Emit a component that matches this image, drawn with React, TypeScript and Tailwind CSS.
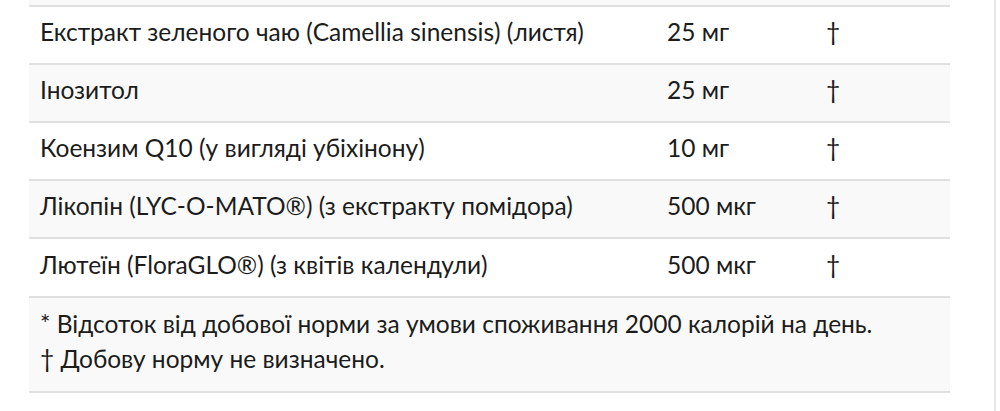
import React from 'react';

const rows = [
    { name: 'Екстракт зеленого чаю (Camellia sinensis) (листя)', amount: '25 мг' },
    { name: 'Інозитол', amount: '25 мг' },
    { name: 'Коензим Q10 (у вигляді убіхінону)', amount: '10 мг' },
    { name: 'Лікопін (LYC-O-MATO®) (з екстракту помідора)', amount: '500 мкг' },
    { name: 'Лютеїн (FloraGLO®) (з квітів календули)', amount: '500 мкг' },
];

export default function App() {
    return (
        <div className="flex w-[1000px] h-[411px] bg-white text-[#1c1c1c] overflow-hidden" style={{ fontFamily: 'Lato, "Noto Sans", sans-serif' }}>
            <div className="w-[994px] pl-[29px] pr-[44px]">
                {/* tail of the previous (striped) row */}
                <div className="h-[5px] bg-[#f9f9f9]" />

                <table className="w-full border-collapse text-[24.5px] leading-none">
                    <tbody>
                        {rows.map((row, i) => (
                            <tr key={row.name} className={`h-[58px] border-t-2 border-[#e0e0e0] ${i % 2 === 1 ? 'bg-[#f9f9f9]' : 'bg-white'}`}>
                                <td className="w-[627px] pl-[11px] pb-[5px] align-middle">{row.name}</td>
                                <td className="w-[159px] pl-[11px] pb-[5px] align-middle">{row.amount}</td>
                                <td className="pl-[11px] pb-[5px] align-middle">†</td>
                            </tr>
                        ))}
                    </tbody>
                </table>

                {/* Footnotes */}
                <div className="h-[97px] border-y-2 border-[#e0e0e0] bg-[#f9f9f9] pl-[11px] pt-[8px] text-[24.5px] leading-[35px]">
                    <p>* Відсоток від добової норми за умови споживання 2000 калорій на день.</p>
                    <p>† Добову норму не визначено.</p>
                </div>
            </div>
            <div className="w-[2px] h-full bg-[#e6e6e6]" />
        </div>
    );
}
